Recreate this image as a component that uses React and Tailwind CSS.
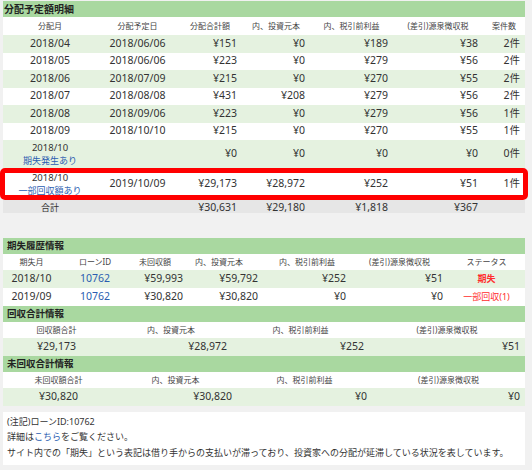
import React from "react";

const C1 = "grid grid-cols-[94px_81px_64px_68px_83px_90px_42px]";
const C2 = "grid grid-cols-[57px_70px_58px_75px_88px_97px_77px]";
const C3 = "grid grid-cols-[107px_122px_137px_156px]";
const C4 = "grid grid-cols-[111px_123px_135px_153px]";

function Title({ children, first }) {
  return (
    <div
      className={
        first
          ? "h-[16px] bg-[#a9d8a0] flex items-center pl-[1px] text-[10px] font-bold text-[#222]"
          : "h-[16px] bg-[#a9d8a0] flex items-center pl-[4px] text-[9.5px] font-bold text-[#222]"
      }
    >
      {children}
    </div>
  );
}

const sec1Rows = [
  ["2018/04", "2018/06/06", "¥151", "¥0", "¥189", "¥38", "2件"],
  ["2018/05", "2018/06/06", "¥223", "¥0", "¥279", "¥56", "2件"],
  ["2018/06", "2018/07/09", "¥215", "¥0", "¥270", "¥55", "2件"],
  ["2018/07", "2018/08/08", "¥431", "¥208", "¥279", "¥56", "2件"],
  ["2018/08", "2018/09/06", "¥223", "¥0", "¥279", "¥56", "1件"],
  ["2018/09", "2018/10/10", "¥215", "¥0", "¥270", "¥55", "1件"],
];

function R({ children }) {
  return <div className="text-right pr-[5px]">{children}</div>;
}
function Cn({ children }) {
  return <div className="text-center">{children}</div>;
}

export default function App() {
  return (
    <div className="w-[532px] h-[470px] bg-[#f1f1f1] pt-[1px] pl-[3px] text-[#333] font-[family-name:'Noto_Sans','Noto_Sans_CJK_JP',sans-serif] overflow-hidden">
      <div className="w-[522px]">
        {/* Section 1 */}
        <Title first>分配予定額明細</Title>
        <div className={`${C1} h-[18px] items-center bg-white text-[8px] text-[#444]`}>
          <Cn>分配月</Cn>
          <Cn>分配予定日</Cn>
          <Cn>分配合計額</Cn>
          <Cn>内、投資元本</Cn>
          <Cn>内、税引前利益</Cn>
          <Cn>(差引)源泉徴収税</Cn>
          <Cn>案件数</Cn>
        </div>
        {sec1Rows.map((r, i) => (
          <div
            key={i}
            className={`${C1} h-[17.5px] items-center text-[10.5px] ${i % 2 === 0 ? "bg-[#e5f2e0]" : "bg-white"}`}
          >
            <Cn>{r[0]}</Cn>
            <Cn>{r[1]}</Cn>
            <R>{r[2]}</R>
            <R>{r[3]}</R>
            <R>{r[4]}</R>
            <R>{r[5]}</R>
            <R>{r[6]}</R>
          </div>
        ))}
        <div className={`${C1} h-[28px] items-center text-[10.5px] bg-[#e5f2e0]`}>
          <div className="flex flex-col items-center">
            <div className="leading-[13px] text-[9.5px]">2018/10</div>
            <div className="leading-[13px] text-[9px] text-[#2a5db0]">期失発生あり</div>
          </div>
          <div></div>
          <R>¥0</R>
          <R>¥0</R>
          <R>¥0</R>
          <R>¥0</R>
          <R>0件</R>
        </div>
        <div className={`${C1} relative h-[32px] items-center text-[10.5px] bg-white`}>
          <div className="flex flex-col items-center">
            <div className="leading-[13px] text-[9.5px]">2018/10</div>
            <div className="leading-[13px] text-[9px] text-[#2a5db0]">一部回収額あり</div>
          </div>
          <Cn>2019/10/09</Cn>
          <R>¥29,173</R>
          <R>¥28,972</R>
          <R>¥252</R>
          <R>¥51</R>
          <R>1件</R>
          <div className="absolute -left-[3px] -right-[3px] top-0 bottom-0 border-[5px] border-[#ff0000] rounded-[5px] pointer-events-none"></div>
        </div>
        <div className={`${C1} h-[13px] items-center text-[10.5px] bg-[#e6e6e6]`}>
          <div className="text-center text-[9px]">合計</div>
          <div></div>
          <R>¥30,631</R>
          <R>¥29,180</R>
          <R>¥1,818</R>
          <R>¥367</R>
          <div></div>
        </div>

        <div className="h-[25px]"></div>

        {/* Section 2 */}
        <Title>期失履歴情報</Title>
        <div className={`${C2} h-[16px] items-center bg-white text-[8px] text-[#444]`}>
          <Cn>期失月</Cn>
          <Cn>ローンID</Cn>
          <div className="pl-[9px]">未回収額</div>
          <div className="pl-[7px]">内、投資元本</div>
          <Cn>内、税引前利益</Cn>
          <Cn>(差引)源泉徴収税</Cn>
          <Cn>ステータス</Cn>
        </div>
        <div className={`${C2} h-[18px] items-center text-[10.5px] bg-[#e5f2e0]`}>
          <Cn>2018/10</Cn>
          <div className="text-center text-[#2a5db0]">10762</div>
          <R>¥59,993</R>
          <R>¥59,792</R>
          <R>¥252</R>
          <R>¥51</R>
          <div className="text-center text-[9px] font-bold text-[#ff2d2d]">期失</div>
        </div>
        <div className={`${C2} h-[18px] items-center text-[10.5px] bg-white`}>
          <Cn>2019/09</Cn>
          <div className="text-center text-[#2a5db0]">10762</div>
          <R>¥30,820</R>
          <R>¥30,820</R>
          <R>¥0</R>
          <R>¥0</R>
          <div className="text-center text-[9px] text-[#ff2d2d]">一部回収(1)</div>
        </div>

        {/* Section 3 */}
        <Title>回収合計情報</Title>
        <div className={`${C3} h-[16px] items-center bg-white text-[8px] text-[#444]`}>
          <Cn>回収額合計</Cn>
          <Cn>内、投資元本</Cn>
          <Cn>内、税引前利益</Cn>
          <Cn>(差引)源泉徴収税</Cn>
        </div>
        <div className={`${C3} h-[18px] items-center text-[10.5px] bg-[#e5f2e0]`}>
          <Cn>¥29,173</Cn>
          <R>¥28,972</R>
          <R>¥252</R>
          <R>¥51</R>
        </div>

        {/* Section 4 */}
        <Title>未回収合計情報</Title>
        <div className={`${C4} h-[16px] items-center bg-white text-[8px] text-[#444]`}>
          <Cn>未回収額合計</Cn>
          <Cn>内、投資元本</Cn>
          <Cn>内、税引前利益</Cn>
          <Cn>(差引)源泉徴収税</Cn>
        </div>
        <div className={`${C4} h-[18px] items-center text-[10.5px] bg-[#e5f2e0]`}>
          <Cn>¥30,820</Cn>
          <R>¥30,820</R>
          <R>¥0</R>
          <R>¥0</R>
        </div>

        <div className="h-[6px]"></div>

        {/* Note */}
        <div className="h-[53px] bg-white pt-[1.5px] pl-[4px] text-[9px] leading-[15.5px] text-[#333]">
          <div>(注記)ローンID:10762</div>
          <div>
            詳細は<span className="text-[#2a5db0]">こちら</span>をご覧ください。
          </div>
          <div>サイト内での「期失」という表記は借り手からの支払いが滞っており、投資家への分配が延滞している状況を表しています。</div>
        </div>
      </div>
    </div>
  );
}
